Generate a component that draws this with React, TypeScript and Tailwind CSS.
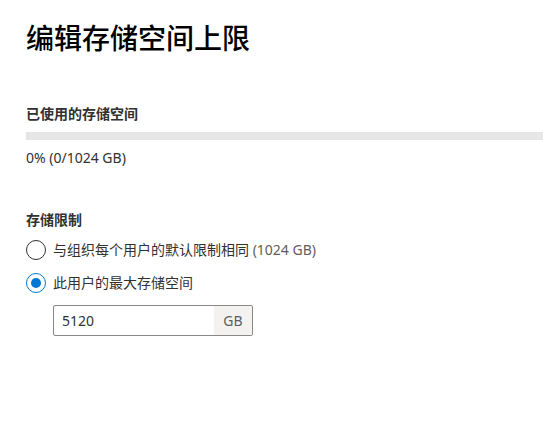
import { useState } from "react";

const font = "font-['Segoe_UI','Noto_Sans','Noto_Sans_CJK_SC',sans-serif]";

function Radio({ checked, onClick, children }: { checked: boolean; onClick: () => void; children: React.ReactNode }) {
  return (
    <button type="button" onClick={onClick} className="flex items-center h-5 gap-[7px] text-left">
      <span
        className={
          "w-5 h-5 rounded-full border flex items-center justify-center bg-white " +
          (checked ? "border-[#0078d4]" : "border-[#323130]")
        }
      >
        {checked && <span className="w-[10px] h-[10px] rounded-full bg-[#0078d4]" />}
      </span>
      <span className="text-[14px] leading-5 text-[#323130]">{children}</span>
    </button>
  );
}

export default function App() {
  const [mode, setMode] = useState<"default" | "custom">("custom");
  const [value, setValue] = useState("5120");

  return (
    <div className={"w-[543px] h-[437px] bg-white pl-[26px] overflow-hidden " + font}>
      {/* Título */}
      <h1 className="mt-[20px] text-[28px] leading-[36px] font-medium text-[#000]">编辑存储空间上限</h1>

      {/* Espacio usado */}
      <div className="mt-[48px] text-[14px] leading-5 font-semibold text-[#323130]">已使用的存储空间</div>
      <div className="mt-2 h-2 bg-[#e6e6e6]">
        <div className="h-full bg-[#0078d4]" style={{ width: "0%" }} />
      </div>
      <div className="mt-2 text-[14px] leading-5 text-[#323130]">0% (0/1024 GB)</div>

      {/* Límite */}
      <div className="mt-[42px] text-[14px] leading-5 font-semibold text-[#323130]">存储限制</div>
      <div className="mt-[10px] flex flex-col gap-[13px]">
        <Radio checked={mode === "default"} onClick={() => setMode("default")}>
          与组织每个用户的默认限制相同 <span className="text-[#605e5c]">(1024 GB)</span>
        </Radio>
        <Radio checked={mode === "custom"} onClick={() => setMode("custom")}>
          此用户的最大存储空间
        </Radio>
      </div>

      <div className="mt-[12px] ml-[27px] flex w-[200px] h-[31px] border border-[#8a8886] rounded-[2px] overflow-hidden">
        <input
          value={value}
          onChange={(e) => setValue(e.target.value)}
          className="flex-1 min-w-0 px-2 text-[14px] text-[#323130] outline-none"
        />
        <span className="w-[38px] flex items-center justify-center bg-[#f3f2f1] text-[14px] text-[#605e5c]">GB</span>
      </div>
    </div>
  );
}
